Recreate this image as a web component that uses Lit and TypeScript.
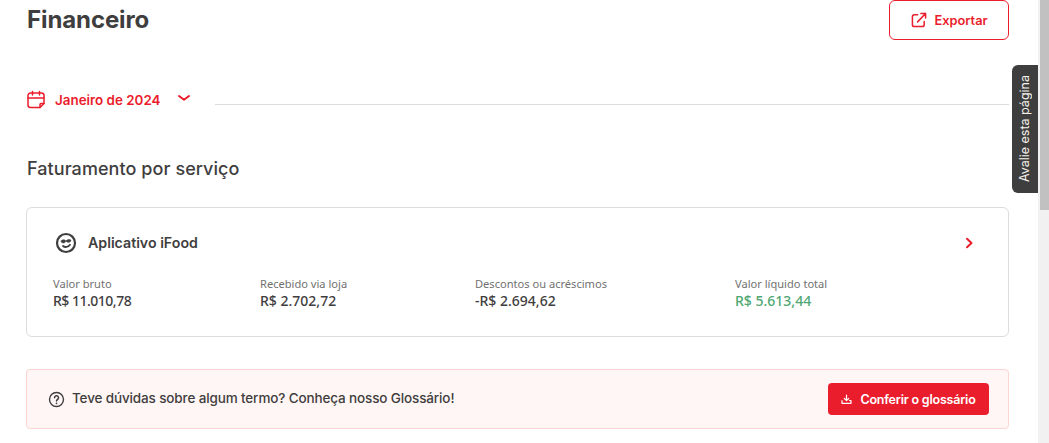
import { LitElement, html, css } from "lit";
import { customElement } from "lit/decorators.js";

const chevronDown = html`<svg width="14" height="14" viewBox="0 0 14 14" fill="none" stroke="#ea1d2c" stroke-width="2" stroke-linecap="round" stroke-linejoin="round"><path d="M2 5l5 3.800 5-3.800"/></svg>`;

@customElement("app-root")
export class AppRoot extends LitElement {
  static styles = css`
    :host { display: block; height: 443px; overflow: hidden; font-family: "Inter", "Noto Sans", sans-serif; color: #3f3e3e; background: #fff; position: relative; }
    .page { display: flex; height: 443px; }
    .main { flex: 1; min-width: 0; padding: 0 29px 0 26px; box-sizing: border-box; }
    .bar { width: 11px; background: #f1f1f1; }
    .thumb { margin-left: 2px; height: 210px; background: #c1c1c1; }
    .head { display: flex; justify-content: space-between; align-items: flex-start; height: 40px; }
    h1 { margin: 0 0 0 1px; font-size: 24px; line-height: 40px; font-weight: 650; letter-spacing: -0.1px; }
    .export { width: 120px; height: 40px; box-sizing: border-box; border: 1px solid #ea1d2c; border-radius: 6px; display: flex; align-items: center; justify-content: center; gap: 7px; color: #ea1d2c; font-size: 12.8px; font-weight: 600; background: #fff; padding-left: 1px; }
    .period { display: flex; align-items: center; margin-top: 48px; height: 24px; color: #ea1d2c; font-size: 13.4px; font-weight: 600; }
    .period .cal { margin-right: 9px; display: block; }
    .period .chev { margin-left: 16px; display: block; margin-top: -1px; }
    .rule { flex: 1; height: 1px; background: #dcdcdc; margin-left: 24px; margin-top: 9px; }
    h2 { margin: 45px 0 0 1px; font-size: 18px; line-height: 24px; font-weight: 500; letter-spacing: 0.07px; }
    .card { margin-top: 26px; height: 130px; box-sizing: border-box; border: 1px solid #dcdcdc; border-radius: 6px; padding: 0 26px; display: flex; flex-direction: column; }
    .card-head { display: flex; align-items: center; height: 69px; padding-left: 2px; padding-right: 6px; font-size: 14.2px; font-weight: 600; gap: 11px; }
    .card-head .name { flex: 1; }
    .cols { display: grid; grid-template-columns: 207px 215px 260px 1fr; }
    .label { font-family: "Noto Sans", sans-serif; font-size: 11.1px; line-height: 14px; color: #717171; }
    .value { font-family: "Noto Sans", sans-serif; font-size: 14px; line-height: 19px; font-weight: 500; color: #3f3e3e; }
    .value.tight { letter-spacing: -0.5px; }
    .value.green { color: #50a773; }
    .banner { margin-top: 32px; height: 60px; box-sizing: border-box; background: #fff6f5; border: 1px solid #fcd4d1; border-radius: 4px; padding: 0 19px 0 21px; display: flex; align-items: center; gap: 7px; font-size: 13.5px; font-weight: 500; letter-spacing: -0.135px; }
    .banner .text { flex: 1; padding-bottom: 2px; }
    .cta { width: 161px; height: 32px; border-radius: 4px; background: #ea1d2c; color: #fff; display: flex; align-items: center; justify-content: center; gap: 8px; font-size: 12.5px; font-weight: 600; letter-spacing: -0.2px; }
    .tab { position: absolute; left: 1012px; top: 65px; width: 26px; height: 128px; box-sizing: border-box; background: #3f3e3e; border-radius: 6px 0 0 6px; color: #f5f0eb; display: flex; align-items: center; justify-content: center; padding-right: 2px; }
    .tab span { writing-mode: vertical-rl; transform: rotate(180deg); font-size: 12.5px; white-space: nowrap; }
    svg { flex: none; }
  `;

  render() {
    return html`
      <div class="page">
        <div class="main">
          <div class="head">
            <h1>Financeiro</h1>
            <div class="export">
              <svg width="16" height="16" viewBox="0 0 17 17" fill="none" stroke="#ea1d2c" stroke-width="1.600" stroke-linecap="round" stroke-linejoin="round"><path d="M7 3H3.500A2 2 0 0 0 1.500 5v8.500a2 2 0 0 0 2 2H12a2 2 0 0 0 2-2V10"/><path d="M7 10.500 15.500 1.500M10.500 1.500h5v5"/></svg>
              Exportar
            </div>
          </div>
          <div class="period">
            <svg class="cal" width="20" height="20" viewBox="0 0 20 20" fill="none" stroke="#ea1d2c" stroke-width="1.500" stroke-linecap="round" stroke-linejoin="round"><path d="M14 17.500H4.500a2.500 2.500 0 0 1-2.500-2.500V5.500A2.500 2.500 0 0 1 4.500 3h11A2.500 2.500 0 0 1 18 5.500V13.500l-4 4Z"/><path d="M2 8h16M6.500 1.500v3.500M13.500 1.500v3.500M14 17.500V14.500a1 1 0 0 1 1-1h3"/></svg>
            Janeiro de 2024
            <span class="chev">${chevronDown}</span>
            <div class="rule"></div>
          </div>
          <h2>Faturamento por serviço</h2>
          <div class="card">
            <div class="card-head">
              <svg width="22" height="22" viewBox="0 0 22 22" fill="none" stroke="#3f3e3e" stroke-linecap="round"><circle cx="11" cy="11" r="9" stroke-width="2.200"/><path d="M6.200 9.200c0-1.500 3.600-1.800 4.400-.7.600 1.200-.8 2.400-2.300 2.400-1.300 0-2.100-.6-2.100-1.700ZM11.400 8.800c.3-1.300 3.700-1.800 4.400-.7.500 1.100-.7 2.200-2.200 2.200-1.400 0-2.400-.4-2.200-1.500Z" fill="#3f3e3e" stroke-width=".6"/><path d="M8 14c1.800 1.600 5.200 1.300 7-1.200" stroke-width="1.800"/></svg>
              <span class="name">Aplicativo iFood</span>
              <svg width="14" height="14" viewBox="0 0 14 14" fill="none" stroke="#ea1d2c" stroke-width="2" stroke-linecap="round" stroke-linejoin="round"><path d="M5 2.800 9.500 7 5 11.200"/></svg>
            </div>
            <div class="cols">
              <div><div class="label">Valor bruto</div><div class="value tight">R$ 11.010,78</div></div>
              <div><div class="label">Recebido via loja</div><div class="value">R$ 2.702,72</div></div>
              <div><div class="label">Descontos ou acréscimos</div><div class="value">-R$ 2.694,62</div></div>
              <div><div class="label">Valor líquido total</div><div class="value green">R$ 5.613,44</div></div>
            </div>
          </div>
          <div class="banner">
            <svg width="17" height="17" viewBox="0 0 17 17" fill="none" stroke="#3f3e3e" stroke-linecap="round" stroke-width="1.400"><circle cx="8.500" cy="8.500" r="7"/><path d="M6.500 6.800a2 2 0 1 1 3 1.700c-.7.400-1 .8-1 1.500" stroke-width="1.500"/><path d="M8.500 12.300v.1" stroke-width="1.600"/></svg>
            <span class="text">Teve dúvidas sobre algum termo? Conheça nosso Glossário!</span>
            <div class="cta">
              <svg width="11" height="11" viewBox="0 0 11 11" fill="none" stroke="#fff" stroke-width="1.200" stroke-linecap="round" stroke-linejoin="round"><path d="M5.500 1v5.500M3.300 4.500l2.200 2.200 2.200-2.200M1 6.500v2.800h9V6.500h-1.500"/></svg>
              Conferir o glossário
            </div>
          </div>
        </div>
        <div class="bar"><div class="thumb"></div></div>
      </div>
      <div class="tab"><span>Avalie esta página</span></div>
    `;
  }
}
